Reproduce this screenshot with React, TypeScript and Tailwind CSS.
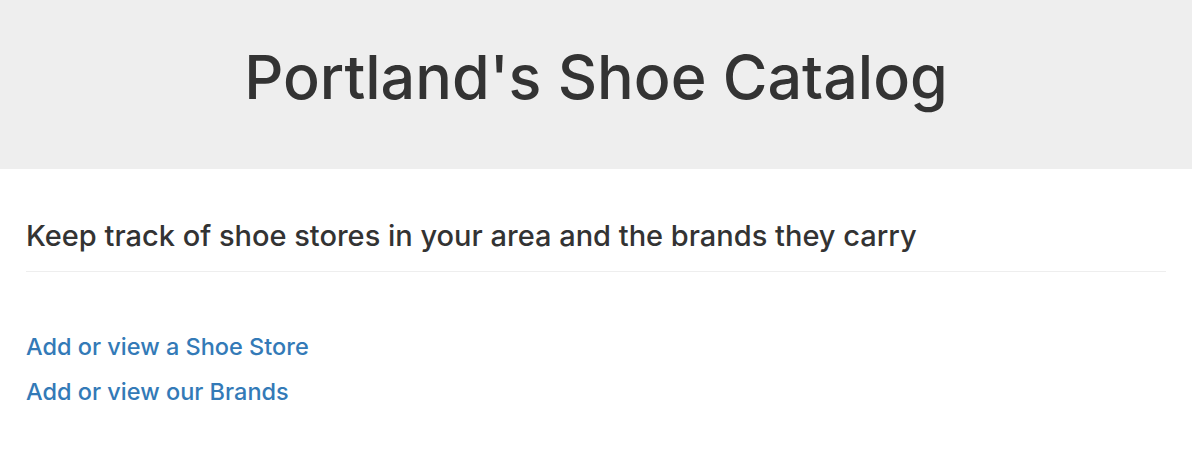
export default function App() {
  return (
    <div className="min-h-screen bg-white font-['Inter','Liberation_Sans',Arial,sans-serif] text-[#333]">
      {/* Jumbotron */}
      <div className="bg-[#eeeeee] pt-[43px] pb-[57px]">
        <h1 className="text-center text-[61px] leading-[69px] font-medium">Portland's Shoe Catalog</h1>
      </div>

      <div className="mx-auto w-[1170px] px-[15px]">
        {/* Page header */}
        <div className="mt-[50px] border-b border-[#eeeeee] pb-[19px]">
          <h2 className="text-[29px] leading-[33px] font-medium">
            Keep track of shoe stores in your area and the brands they carry
          </h2>
        </div>

        {/* Links */}
        <div className="mt-[62px] flex flex-col gap-[19px]">
          <h3 className="text-[23.5px] leading-[26px] font-medium">
            <a href="#" className="text-[#337ab7] hover:underline">Add or view a Shoe Store</a>
          </h3>
          <h3 className="text-[23.5px] leading-[26px] font-medium">
            <a href="#" className="text-[#337ab7] hover:underline">Add or view our Brands</a>
          </h3>
        </div>
      </div>
    </div>
  );
}
